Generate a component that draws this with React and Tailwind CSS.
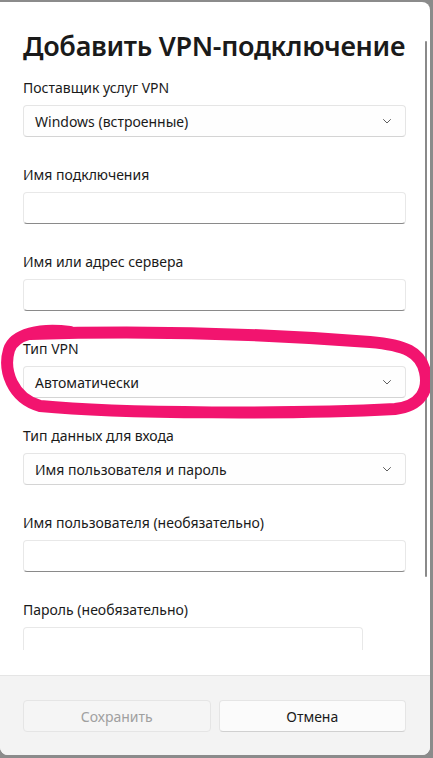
import React from "react";

const font = { fontFamily: '"Segoe UI", "Noto Sans", "Open Sans", sans-serif' };

function Chevron() {
  return (
    <svg width="12" height="12" viewBox="0 0 12 12" fill="none">
      <path d="M2.5 4.5 L6 8 L9.5 4.5" stroke="#5f5f5f" strokeWidth="1" strokeLinecap="round" strokeLinejoin="round" />
    </svg>
  );
}

function Label({ children }) {
  return <div className="h-[20px] leading-[20px] text-[14px] text-[#1a1a1a] mb-[7px]">{children}</div>;
}

function Select({ value }) {
  return (
    <div className="h-[32px] rounded-[4px] border border-[#e5e5e5] border-b-[#d4d4d4] bg-[#fefefe] flex items-center justify-between pl-[11px] pr-[12px]">
      <span className="text-[14px] text-[#1a1a1a]">{value}</span>
      <Chevron />
    </div>
  );
}

function Input({ narrow }) {
  return (
    <div className={`h-[32px] rounded-[4px] border border-[#e8e8e8] border-b-[#8a8a8a] bg-white ${narrow ? "w-[340px]" : ""}`} />
  );
}

function Field({ label, children, last }) {
  return (
    <div className={last ? "" : "mb-[28px]"}>
      <Label>{label}</Label>
      {children}
    </div>
  );
}

export default function App() {
  return (
    <div className="h-[758px] bg-[#8b8b8b] pt-[2px] pr-[3px] pb-[3px]" style={font}>
      <div className="h-full bg-white rounded-r-[8px] rounded-bl-[8px] flex flex-col overflow-hidden relative">
        <div className="h-[648px] overflow-hidden relative">
          <div className="pl-[23px] pr-[24px] pt-[26px]">
            <h1 className="text-[27px] leading-[36px] font-semibold text-[#1a1a1a] mb-[14px] whitespace-nowrap tracking-[-0.3px]">
              Добавить VPN-подключение
            </h1>
            <Field label="Поставщик услуг VPN"><Select value="Windows (встроенные)" /></Field>
            <Field label="Имя подключения"><Input /></Field>
            <Field label="Имя или адрес сервера"><Input /></Field>
            <Field label="Тип VPN"><Select value="Автоматически" /></Field>
            <Field label="Тип данных для входа"><Select value="Имя пользователя и пароль" /></Field>
            <Field label="Имя пользователя (необязательно)"><Input /></Field>
            <Field label="Пароль (необязательно)" last><Input narrow /></Field>
          </div>
          <div className="absolute right-[3px] top-[39px] w-[2px] h-[536px] rounded-full bg-[#8a8a8a]" />
        </div>
        <div className="h-[25px]" />
        <div className="flex-1 bg-[#f3f3f3] border-t border-[#e5e5e5] px-[23px] pr-[24px] pt-[24px] flex gap-[8px]">
          <div className="flex-1 h-[32px] rounded-[4px] border border-[#e5e5e5] bg-[#f5f5f5] flex items-center justify-center text-[14px] text-[#a0a0a0]">
            Сохранить
          </div>
          <div className="flex-1 h-[32px] rounded-[4px] border border-[#e5e5e5] border-b-[#d0d0d0] bg-[#fbfbfb] flex items-center justify-center text-[14px] text-[#1a1a1a]">
            Отмена
          </div>
        </div>
        <svg className="absolute left-0 top-[316px] pointer-events-none" width="430" height="102" viewBox="0 0 430 102" fill="none">
          <path
            d="M70 14 C 40 10, 14 16, 9 32 C 3 52, 12 80, 40 88 C 120 96, 300 96, 395 91 C 421 88, 429 72, 425 54 C 421 34, 405 27, 370 24 C 280 17, 160 12, 30 16"
            stroke="#f2146f"
            strokeWidth="12"
            strokeLinecap="round"
            strokeLinejoin="round"
          />
        </svg>
      </div>
    </div>
  );
}
